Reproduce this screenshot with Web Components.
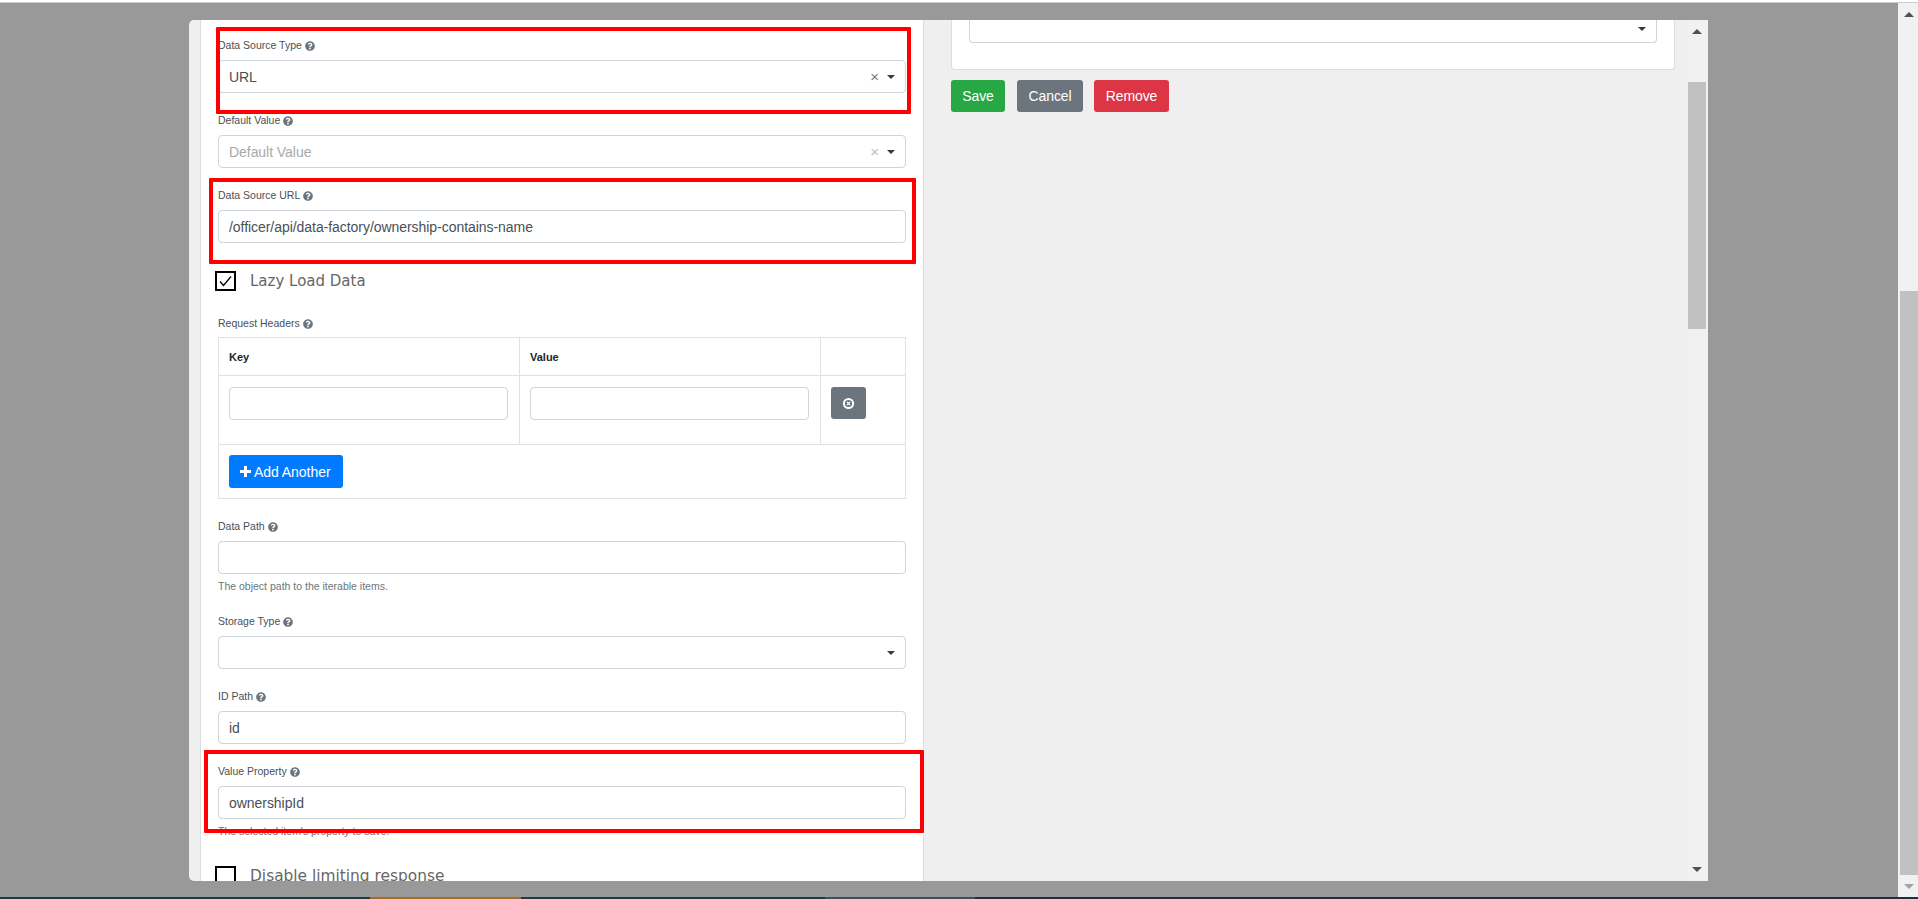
<!DOCTYPE html>
<html>
<head>
<meta charset="utf-8">
<title>Form builder</title>
<style>
  html, body { margin: 0; height: 100%; overflow: hidden; background: #999; }
  body { font-family: "Liberation Sans", Arial, sans-serif; }
</style>
</head>
<body>
<app-shell>
  <edit-modal>
    <div slot="left">
      <form-field label="Data Source Type" kind="select" value="URL" clear></form-field>
      <form-field label="Default Value" kind="select" placeholder="Default Value" clear></form-field>
      <form-field label="Data Source URL" value="/officer/api/data-factory/ownership-contains-name"></form-field>
      <check-row label="Lazy Load Data" checked></check-row>
      <headers-table></headers-table>
      <form-field label="Data Path" help="The object path to the iterable items."></form-field>
      <form-field label="Storage Type" kind="select"></form-field>
      <form-field label="ID Path" value="id"></form-field>
      <form-field label="Value Property" value="ownershipId" help="The selected item's property to save."></form-field>
      <check-row label="Disable limiting response" class="last"></check-row>
    </div>
    <div slot="right">
      <right-card></right-card>
      <action-bar></action-bar>
    </div>
    <red-box style="left:27px;top:7px;width:695px;height:87px"></red-box>
    <red-box style="left:20px;top:158px;width:707px;height:86px"></red-box>
    <red-box style="left:15px;top:730px;width:720px;height:83px"></red-box>
  </edit-modal>
</app-shell>

<script>
const helpIcon = `<svg class="q" viewBox="0 0 512 512" width="10" height="10"><path fill="#6c757d" d="M504 256c0 136.997-111.043 248-248 248S8 392.997 8 256C8 119.083 119.043 8 256 8s248 111.083 248 248zM262.655 90c-54.497 0-89.255 22.957-116.549 63.758-3.536 5.286-2.353 12.415 2.715 16.258l34.699 26.31c5.205 3.947 12.621 3.008 16.665-2.122 17.864-22.658 30.113-35.797 57.303-35.797 20.429 0 45.698 13.148 45.698 32.958 0 14.976-12.363 22.667-32.534 33.976C247.128 238.528 216 254.941 216 296v4c0 6.627 5.373 12 12 12h56c6.627 0 12-5.373 12-12v-1.333c0-28.462 83.186-29.647 83.186-106.667 0-58.002-60.165-102-116.531-102zM256 338c-25.365 0-46 20.635-46 46 0 25.364 20.635 46 46 46s46-20.636 46-46c0-25.365-20.635-46-46-46z"/></svg>`

const caret = `<svg width="8" height="4" viewBox="0 0 8 4"><path d="M0 0h8L4 4z" fill="#343a40"/></svg>`

class AppShell extends HTMLElement {
  constructor () {
    super()
    this.attachShadow({ mode: 'open' }).innerHTML = `
    <style>
      :host { display: flex; flex-direction: column; height: 899px; width: 1918px; overflow: hidden; }
      .top { height: 2px; background: #fff; border-bottom: 1px solid #ccc; }
      .main { height: 894px; display: flex; background: #999; }
      .backdrop { flex: 1; padding: 17px 190px 16px 189px; box-sizing: border-box; height: 894px; }
      .bar { width: 20px; background: #f1f1f1; display: flex; flex-direction: column; align-items: center; }
      .up { margin: 9px 0 0 2px; width: 0; height: 0; border: 5px solid transparent; border-top: 0; border-bottom: 5px solid #505050; }
      .thumb { width: 18px; margin-left: 2px; height: 584px; margin-top: 274px; background: #c1c1c1; }
      .down { margin: 9px 0 0 2px; width: 0; height: 0; border: 5px solid transparent; border-bottom: 0; border-top: 5px solid #a3a3a3; }
      .task { height: 2px; display: flex; background: #1f2f3d; }
      .task i { display: block; }
    </style>
    <div class="top"></div>
    <div class="main">
      <div class="backdrop"><slot></slot></div>
      <div class="bar"><div class="up"></div><div class="thumb"></div><div class="down"></div></div>
    </div>
    <div class="task">
      <i style="width:370px;background:#23393f"></i>
      <i style="width:151px;background:#a8692b"></i>
      <i style="width:304px;background:#23393f"></i>
      <i style="width:150px;background:#3e5059"></i>
    </div>`
  }
}
customElements.define('app-shell', AppShell)

class EditModal extends HTMLElement {
  constructor () {
    super()
    this.attachShadow({ mode: 'open' }).innerHTML = `
    <style>
      :host { display: block; position: relative; height: 861px; width: 1519px; background: #efefef; border-radius: 5px 0 0 5px; overflow: hidden; }
      .cols { display: flex; height: 861px; }
      .left { width: 724px; margin-left: 11px; box-sizing: border-box; background: #fff; border-left: 1px solid #ddd; border-right: 1px solid #ddd; padding: 1px 17px 0; overflow: hidden; flex: none; }
      .right { flex: none; width: 764px; box-sizing: border-box; padding-left: 27px; }
      .scroll { width: 20px; background: #f1f1f1; display: flex; flex-direction: column; align-items: center; flex: none; }
      .up { margin: 9px 2px 0 0; width: 0; height: 0; border: 5px solid transparent; border-top: 0; border-bottom: 5px solid #505050; }
      .thumb { width: 18px; margin-right: 2px; height: 247px; margin-top: 48px; background: #c1c1c1; }
      .down { margin: 538px 2px 0 0; width: 0; height: 0; border: 5px solid transparent; border-bottom: 0; border-top: 5px solid #505050; }
    </style>
    <div class="cols">
      <div class="left"><slot name="left"></slot></div>
      <div class="right"><slot name="right"></slot></div>
      <div class="scroll"><div class="up"></div><div class="thumb"></div><div class="down"></div></div>
    </div>
    <slot></slot>`
  }
}
customElements.define('edit-modal', EditModal)

class FormField extends HTMLElement {
  constructor () {
    super()
    this.attachShadow({ mode: 'open' })
  }

  connectedCallback () {
    const value = this.getAttribute('value') || ''
    const placeholder = this.getAttribute('placeholder') || ''
    const help = this.getAttribute('help')
    const isSelect = this.getAttribute('kind') === 'select'
    this.shadowRoot.innerHTML = `
    <style>
      :host { display: block; padding-top: 20px; height: 55px; }
      :host([help]) { height: 75px; }
      .label { display: flex; align-items: center; gap: 3px; height: 13px; margin-bottom: 8px; margin-top: -2px; font-size: 10.5px; line-height: 13px; color: #495057; }
      .box { box-sizing: border-box; height: 33px; border: 1px solid #ced4da; border-radius: 4px; background: #fff; display: flex; align-items: center; padding: 0 10px; font-size: 14px; letter-spacing: -0.05px; color: #495057; }
      .text { flex: 1; white-space: nowrap; }
      .ph { color: #a9a9a9; }
      .x { color: #777; font-size: 15px; margin-right: 8px; line-height: 1; }
      .ph-x { color: #bdbdbd; }
      .help { font-size: 10.5px; line-height: 13px; color: #6c757d; margin-top: 6px; white-space: nowrap; }
    </style>
    <div class="label"><span>${this.getAttribute('label')}</span>${helpIcon}</div>
    <div class="box">
      <span class="text ${value ? '' : 'ph'}">${value || placeholder}</span>
      ${this.hasAttribute('clear') ? `<span class="x ${value ? '' : 'ph-x'}">×</span>` : ''}
      ${isSelect ? caret : ''}
    </div>
    ${help ? `<div class="help">${help}</div>` : ''}`
  }
}
customElements.define('form-field', FormField)

class CheckRow extends HTMLElement {
  constructor () {
    super()
    this.attachShadow({ mode: 'open' })
  }

  connectedCallback () {
    const tick = this.hasAttribute('checked')
      ? `<svg width="17" height="16" viewBox="0 0 17 16"><path d="M3 8.5l3.5 4L14 3.5" fill="none" stroke="#000" stroke-width="1.3"/></svg>`
      : ''
    this.shadowRoot.innerHTML = `
    <style>
      :host { display: flex; align-items: center; height: 20px; margin-left: -3px; margin-top: 25px; font-family: "DejaVu Sans", Verdana, sans-serif; font-size: 15px; color: #666; white-space: nowrap; }
      :host(.last) { margin-top: 24px; font-size: 15.4px; }
      .check { box-sizing: border-box; width: 21px; height: 20px; border: 2px solid #000; margin-right: 14px; flex: none; }
      svg { display: block; }
    </style>
    <span class="check">${tick}</span><span>${this.getAttribute('label')}</span>`
  }
}
customElements.define('check-row', CheckRow)

class HeadersTable extends HTMLElement {
  constructor () {
    super()
    this.attachShadow({ mode: 'open' }).innerHTML = `
    <style>
      :host { display: block; margin-top: 26px; margin-bottom: 3px; }
      .label { display: flex; align-items: center; gap: 3px; height: 13px; margin-bottom: 7px; font-size: 10.5px; line-height: 13px; color: #495057; }
      .grid { box-sizing: border-box; height: 162px; width: 688px; border: 1px solid #dee2e6; display: grid; grid-template-columns: 301px 301px 1fr; grid-template-rows: 38px 69px 1fr; }
      .c { border-right: 1px solid #dee2e6; border-bottom: 1px solid #dee2e6; padding: 0 10px; box-sizing: border-box; }
      .c.end { border-right: 0; }
      .h { font-size: 11px; font-weight: bold; color: #212529; display: flex; align-items: center; }
      .cell { padding-top: 11px; padding-right: 11px; }
      .input { box-sizing: border-box; height: 33px; border: 1px solid #ced4da; border-radius: 4px; background: #fff; }
      .del { width: 35px; height: 32px; background: #6c757d; border-radius: 3px; display: flex; align-items: center; justify-content: center; }
      .foot { grid-column: 1 / 4; padding: 10px 10px 0; }
      .add { display: inline-flex; align-items: center; gap: 3px; box-sizing: border-box; width: 114px; height: 33px; padding-left: 11px; background: #007bff; color: #fff; border-radius: 3px; font-size: 14px; letter-spacing: -0.05px; }
    </style>
    <div class="label"><span>Request Headers</span>${helpIcon}</div>
    <div class="grid">
      <div class="c h">Key</div>
      <div class="c h">Value</div>
      <div class="c h end"></div>
      <div class="c cell"><div class="input"></div></div>
      <div class="c cell"><div class="input"></div></div>
      <div class="c cell end"><div class="del">
        <svg width="13" height="13" viewBox="0 0 13 13"><circle cx="6.5" cy="6.5" r="4.6" fill="none" stroke="#fff" stroke-width="2"/><path d="M5 5l3 3M8 5l-3 3" stroke="#fff" stroke-width="1.1"/></svg>
      </div></div>
      <div class="foot"><div class="add">
        <svg width="11" height="11" viewBox="0 0 11 11"><path d="M4 0h3v4h4v3H7v4H4V7H0V4h4z" fill="#fff"/></svg><span>Add Another</span>
      </div></div>
    </div>`
  }
}
customElements.define('headers-table', HeadersTable)

class RightCard extends HTMLElement {
  constructor () {
    super()
    this.attachShadow({ mode: 'open' }).innerHTML = `
    <style>
      :host { display: block; box-sizing: border-box; width: 724px; height: 50px; background: #fff; border: 1px solid #ddd; border-top: 0; border-radius: 0 0 4px 4px; padding: 0 17px; }
      .box { box-sizing: border-box; height: 23px; border: 1px solid #ced4da; border-top: 0; border-radius: 0 0 4px 4px; display: flex; align-items: flex-start; justify-content: flex-end; padding: 7px 10px 0 0; }
      svg { display: block; }
    </style>
    <div class="box">${caret}</div>`
  }
}
customElements.define('right-card', RightCard)

class ActionBar extends HTMLElement {
  constructor () {
    super()
    this.attachShadow({ mode: 'open' }).innerHTML = `
    <style>
      :host { display: flex; gap: 11px; margin-top: 10px; }
      span { box-sizing: border-box; height: 32px; display: flex; align-items: center; justify-content: center; border-radius: 3px; color: #fff; font-size: 14px; letter-spacing: -0.09px; }
    </style>
    <span style="width:54px;margin-right:1px;background:#28a745">Save</span>
    <span style="width:66px;background:#6c757d">Cancel</span>
    <span style="width:75px;background:#dc3545">Remove</span>`
  }
}
customElements.define('action-bar', ActionBar)

class RedBox extends HTMLElement {
  constructor () {
    super()
    this.attachShadow({ mode: 'open' }).innerHTML = `
    <style>
      :host { display: block; position: absolute; box-sizing: border-box; border: 4px solid #f00; border-radius: 1px; pointer-events: none; }
    </style>`
  }
}
customElements.define('red-box', RedBox)
</script>
</body>
</html>
